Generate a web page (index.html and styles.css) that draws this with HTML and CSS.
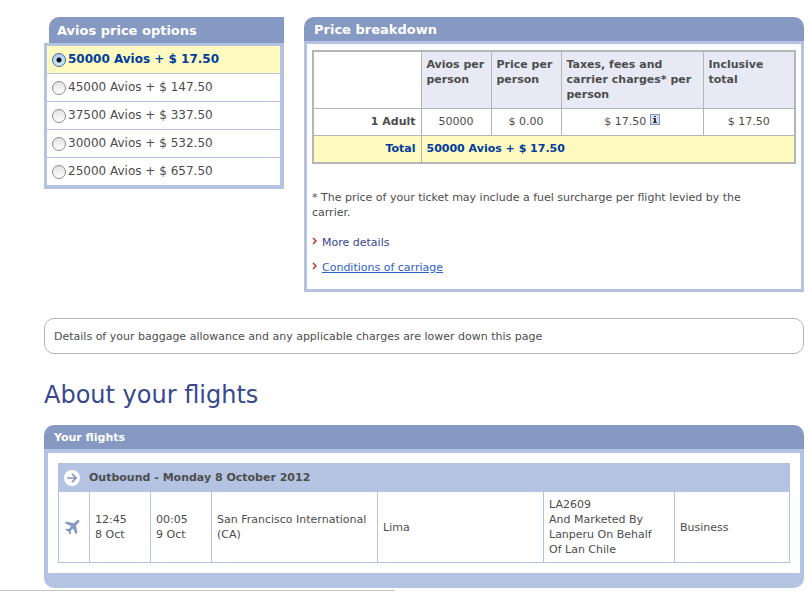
FILE: index.html
```html
<!DOCTYPE html>
<html lang="en">
<head>
    <meta charset="UTF-8">
    <meta name="viewport" content="width=device-width, initial-scale=1.0">
    <title>Price and flight details</title>
    <link rel="stylesheet" href="styles.css">
</head>
<body>
    <div class="pricing">
        <form class="options">
            <h2 class="options-title">Avios price options</h2>
            <div class="options-list">
                <label class="option selected"><input type="radio" name="avios" value="50000" checked>50000 Avios + $ 17.50</label>
                <label class="option"><input type="radio" name="avios" value="45000">45000 Avios + $ 147.50</label>
                <label class="option"><input type="radio" name="avios" value="37500">37500 Avios + $ 337.50</label>
                <label class="option"><input type="radio" name="avios" value="30000">30000 Avios + $ 532.50</label>
                <label class="option"><input type="radio" name="avios" value="25000">25000 Avios + $ 657.50</label>
            </div>
        </form>

        <section class="breakdown">
            <h2 class="breakdown-title">Price breakdown</h2>
            <div class="breakdown-body">
                <table class="price-table">
                    <colgroup>
                        <col class="col-who">
                        <col class="col-unit">
                        <col class="col-unit">
                        <col class="col-tax">
                        <col>
                    </colgroup>
                    <thead>
                        <tr>
                            <td></td>
                            <th scope="col">Avios per person</th>
                            <th scope="col">Price per person</th>
                            <th scope="col">Taxes, fees and carrier charges* per person</th>
                            <th scope="col">Inclusive total</th>
                        </tr>
                    </thead>
                    <tbody>
                        <tr>
                            <th scope="row">1 Adult</th>
                            <td>50000</td>
                            <td>$ 0.00</td>
                            <td>$ 17.50
                                <button type="button" class="info" aria-label="Tax information">
                                    <svg width="10" height="11" viewBox="0 0 10 11" shape-rendering="crispEdges">
                                        <rect width="10" height="11" fill="#7f9bc4"/>
                                        <rect x="1" y="1" width="8" height="9" fill="#d3def0"/>
                                        <path fill="#333" d="M4 2h2v1H4zM3 4h3v4h1v1H3V8h1V5H3z"/>
                                    </svg>
                                </button>
                            </td>
                            <td>$ 17.50</td>
                        </tr>
                        <tr class="total">
                            <th scope="row">Total</th>
                            <td colspan="4">50000 Avios + $ 17.50</td>
                        </tr>
                    </tbody>
                </table>
                <p class="note">* The price of your ticket may include a fuel surcharge per flight levied by the carrier.</p>
                <ul class="links">
                    <li>
                        <svg class="chevron" width="5" height="8" viewBox="0 0 5 8"><path d="M1 1l3 3-3 3" fill="none" stroke="#c4281c" stroke-width="1.4"/></svg>
                        <a class="plain" href="#">More details</a>
                    </li>
                    <li>
                        <svg class="chevron" width="5" height="8" viewBox="0 0 5 8"><path d="M1 1l3 3-3 3" fill="none" stroke="#c4281c" stroke-width="1.4"/></svg>
                        <a href="#">Conditions of carriage</a>
                    </li>
                </ul>
            </div>
        </section>
    </div>

    <p class="baggage">Details of your baggage allowance and any applicable charges are lower down this page</p>

    <h1>About your flights</h1>

    <section class="flights">
        <h2 class="flights-title">Your flights</h2>
        <div class="flights-body">
            <table class="flight-table">
                <colgroup>
                    <col class="col-icon">
                    <col class="col-time">
                    <col class="col-time">
                    <col class="col-place">
                    <col class="col-place">
                    <col class="col-carrier">
                    <col>
                </colgroup>
                <thead>
                    <tr>
                        <th colspan="7">
                            <div class="leg">
                                <svg width="16" height="16" viewBox="0 0 16 16">
                                    <circle cx="8" cy="8" r="8" fill="#fff"/>
                                    <path d="M3 8h9M8 3.800l4.200 4.200L8 12.200" fill="none" stroke="#8599c3" stroke-width="1.700"/>
                                </svg>
                                <span>Outbound - Monday 8 October 2012</span>
                            </div>
                        </th>
                    </tr>
                </thead>
                <tbody>
                    <tr>
                        <td>
                            <svg class="plane" width="16" height="16" viewBox="0 0 16 16">
                                <path fill="#8599c3" d="M15.300 1.200c.3.900 0 1.800-.8 2.600L12 6.600l1.300 7.200-1.500 1.400L9 9.600l-2.300 2.200.4 2.600-1.100 1-1.700-3-3.200-1.600 1-1.100 2.700.3L7.200 7.300 1 4.200l1-1.700 7.700 1.700 2.700-2.500c.9-.8 2-1 2.900-.5z"/>
                            </svg>
                        </td>
                        <td>12:45<br>8 Oct</td>
                        <td>00:05<br>9 Oct</td>
                        <td>San Francisco International (CA)</td>
                        <td>Lima</td>
                        <td class="carrier">LA2609<br>And Marketed By Lanperu On Behalf Of Lan Chile</td>
                        <td>Business</td>
                    </tr>
                </tbody>
            </table>
        </div>
    </section>

    <div class="status-edge"></div>
</body>
</html>
```
FILE: styles.css
```css
* {
    box-sizing: border-box;
}

body {
    margin: 0;
    padding: 17px 8px 0 44px;
    background: #fff;
    color: #4d4d4d;
    font-family: Verdana, "DejaVu Sans", sans-serif;
    font-size: 11px;
    line-height: 15px;
}

h1, h2, p, ul {
    margin: 0;
}

h2 {
    background: #8599c3;
    color: #fff;
    font-size: 13px;
    line-height: 16px;
}

table {
    width: 100%;
    border-collapse: collapse;
    table-layout: fixed;
}

.pricing {
    display: grid;
    grid-template-columns: 240px 1fr;
    gap: 20px;
    align-items: start;
}

/* Avios options */
.options-title {
    margin-left: 5px;
    padding: 6px 8px 4px;
    border-top-left-radius: 10px;
}

.options-list {
    border: 3px solid #b4c3e2;
    border-right-width: 4px;
    border-bottom-width: 4px;
}

.option {
    display: flex;
    align-items: center;
    height: 28px;
    padding-left: 5px;
    border-bottom: 1px solid #b4c3e2;
    font-size: 12px;
    line-height: 17px;
}

.option:last-child {
    height: 27px;
    border-bottom: none;
}

.option.selected {
    background: #fffabf;
    color: #003c9e;
    font-weight: bold;
}

.option input {
    appearance: none;
    width: 14px;
    height: 14px;
    margin: 0 2px 0 0;
    border: 1px solid #8c8c8c;
    border-radius: 50%;
    background: linear-gradient(#e2e2e2, #fff);
}

.option input:checked {
    border-color: #4a678f;
    background: radial-gradient(circle, #111 0 2px, transparent 3px), linear-gradient(#a9cdf2, #cdeaff);
}

/* Price breakdown */
.breakdown-title {
    padding: 5px 10px 3px;
    border-radius: 10px 10px 0 0;
}

.breakdown-body {
    padding: 6px 5px 14px;
    border: 3px solid #b4c3e2;
}

.price-table {
    border: 2px solid #b5b5b5;
}

.price-table th,
.price-table td {
    padding: 5px 5px 6px;
    border: 1px solid #b5b5b5;
    text-align: center;
}

.price-table thead th {
    background: #e7eaf5;
    text-align: left;
    vertical-align: top;
}

.price-table tbody th {
    text-align: right;
}

.price-table .total th,
.price-table .total td {
    background: #fffabf;
    color: #003c9e;
    font-weight: bold;
    text-align: left;
}

.price-table .total th {
    text-align: right;
}

.col-who {
    width: 108px;
}

.col-unit {
    width: 70px;
}

.col-tax {
    width: 142px;
}

.info {
    padding: 0;
    border: none;
    background: none;
    line-height: 0;
    cursor: pointer;
}

.note {
    margin-top: 26px;
    padding-right: 30px;
}

.links {
    padding: 0;
    list-style: none;
}

.links li {
    display: flex;
    gap: 5px;
    margin-top: 15px;
}

.links li + li {
    margin-top: 10px;
}

.chevron {
    margin-top: 2px;
}

.links a {
    color: #2d5fc8;
}

.links .plain {
    color: #38488f;
    text-decoration: none;
}

.baggage {
    margin-top: 26px;
    padding: 10px 9px 9px;
    border: 1px solid #b5b5b5;
    border-radius: 10px;
}

h1 {
    margin: 26px 0 15px;
    color: #38488f;
    font-size: 24px;
    font-weight: normal;
    line-height: 30px;
}

/* Flights */
.flights {
    overflow: hidden;
    border-radius: 10px;
}

.flights-title {
    padding: 5px 10px 3px;
    font-size: 11px;
}

.flights-body {
    padding: 10px;
    border: 4px solid #b4c3e2;
    border-bottom-width: 15px;
}

.flight-table th,
.flight-table td {
    padding: 5px;
    border: 1px solid #b4c3e2;
    text-align: left;
}

.flight-table th {
    background: #b4c3e2;
}

.flight-table .carrier {
    padding-right: 15px;
}

.leg {
    display: flex;
    align-items: center;
    gap: 9px;
    height: 17px;
}

.plane {
    display: block;
}

.col-icon {
    width: 31px;
}

.col-time {
    width: 61px;
}

.col-place {
    width: 166px;
}

.col-carrier {
    width: 131px;
}

/* Top edge of the status strip */
.status-edge {
    position: fixed;
    bottom: 0;
    left: 0;
    width: 395px;
    height: 2px;
    border-top: 1px solid #c4c4c4;
}
```
